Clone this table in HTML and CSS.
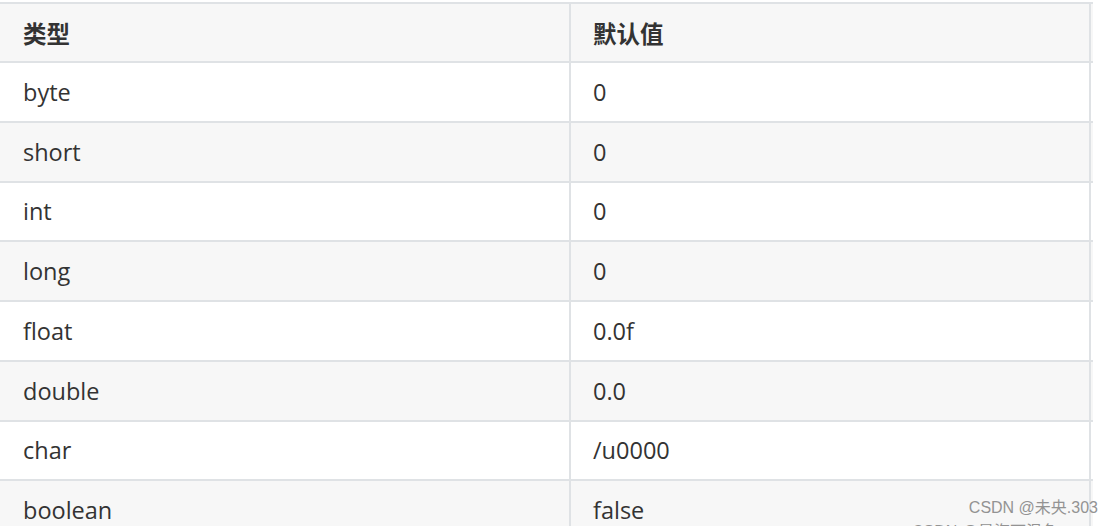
FILE: index.html
```html
<!DOCTYPE html>
<html lang="zh">
<head>
<meta charset="utf-8">
<title>默认值</title>
<link rel="stylesheet" href="styles.css">
</head>
<body>
<div class="page">
  <div class="table">
    <div class="row head"><div class="cell c1">类型</div><div class="cell c2">默认值</div></div>
    <div class="row"><div class="cell c1">byte</div><div class="cell c2">0</div></div>
    <div class="row alt"><div class="cell c1">short</div><div class="cell c2">0</div></div>
    <div class="row"><div class="cell c1">int</div><div class="cell c2">0</div></div>
    <div class="row alt"><div class="cell c1">long</div><div class="cell c2">0</div></div>
    <div class="row"><div class="cell c1">float</div><div class="cell c2">0.0f</div></div>
    <div class="row alt"><div class="cell c1">double</div><div class="cell c2">0.0</div></div>
    <div class="row"><div class="cell c1">char</div><div class="cell c2">/u0000</div></div>
    <div class="row alt"><div class="cell c1">boolean</div><div class="cell c2">false</div></div>
  </div>
  <div class="watermark">
    <div class="wm1">CSDN @未央.303</div>
    <div class="wm2">CSDN @最海可温鱼</div>
  </div>
</div>
</body>
</html>
```
FILE: styles.css
```css
html, body {
  margin: 0;
  padding: 0;
  background: #ffffff;
}
.page {
  position: relative;
  width: 1113px;
  height: 526px;
  overflow: hidden;
  padding-top: 2px;
  box-sizing: border-box;
}
.table {
  margin-left: -2px;
  width: 1095px;
  font-family: "Open Sans", "Noto Sans CJK SC", sans-serif;
  font-size: 23.5px;
  color: #333333;
  border-top: 2px solid #dfe2e5;
}
.row {
  display: flex;
  height: 59.75px;
  box-sizing: border-box;
  border-bottom: 2px solid #dfe2e5;
  background: #ffffff;
}
.row.alt, .row.head {
  background: #f7f7f7;
}
.row.head {
  height: 59px;
  font-weight: 700;
  font-family: "Noto Sans CJK SC", sans-serif;
  font-size: 23.5px;
}
.cell {
  display: flex;
  align-items: center;
  box-sizing: border-box;
  border-left: 2px solid #dfe2e5;
}
.c1 {
  width: 571px;
  padding-left: 23px;
}
.c2 {
  width: 522px;
  padding-left: 22px;
  border-right: 2px solid #dfe2e5;
}
.watermark {
  position: absolute;
  right: 15px;
  top: 496px;
  font-family: "Liberation Sans", "Noto Sans CJK SC", sans-serif;
  font-size: 16px;
  color: #939393;
  text-align: right;
  line-height: 24px;
}
.wm2 {
  margin-right: 40px;
}
```
